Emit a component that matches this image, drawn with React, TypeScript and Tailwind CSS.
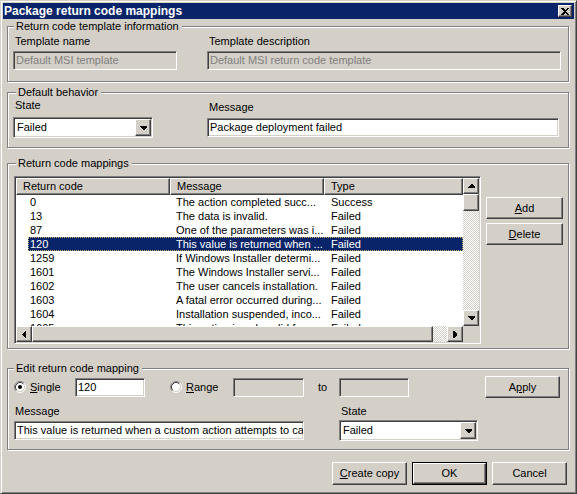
import React from "react";

type Row = { code: string; message: string; type: string; selected?: boolean };

const ROWS: Row[] = [
  { code: "0", message: "The action completed succ...", type: "Success" },
  { code: "13", message: "The data is invalid.", type: "Failed" },
  { code: "87", message: "One of the parameters was i...", type: "Failed" },
  { code: "120", message: "This value is returned when ...", type: "Failed", selected: true },
  { code: "1259", message: "If Windows Installer determi...", type: "Failed" },
  { code: "1601", message: "The Windows Installer servi...", type: "Failed" },
  { code: "1602", message: "The user cancels installation.", type: "Failed" },
  { code: "1603", message: "A fatal error occurred during...", type: "Failed" },
  { code: "1604", message: "Installation suspended, inco...", type: "Failed" },
  { code: "1605", message: "This action is only valid f...", type: "Failed" },
];

const raised =
  "border border-t-white border-l-white border-b-[#404040] border-r-[#404040] shadow-[inset_-1px_-1px_0_#808080] bg-[#d4d0c8]";
const checker =
  "bg-[image:repeating-conic-gradient(#ffffff_0%_25%,#d4d0c8_0%_50%)] bg-[length:2px_2px]";

function Sunken({
  className = "",
  disabled = false,
  children,
}: {
  className?: string;
  disabled?: boolean;
  children?: React.ReactNode;
}) {
  return (
    <div
      className={`border border-t-[#808080] border-l-[#808080] border-b-white border-r-white shadow-[inset_1px_1px_0_#404040,inset_-1px_-1px_0_#d4d0c8] ${
        disabled ? "bg-[#d4d0c8] text-[#808080]" : "bg-white text-black"
      } ${className}`}
    >
      {children}
    </div>
  );
}

function TextBox({ value = "", disabled, className = "" }: { value?: string; disabled?: boolean; className?: string }) {
  return (
    <Sunken disabled={disabled} className={`flex items-center pl-[2px] overflow-hidden whitespace-nowrap h-[19px] ${className}`}>
      {value}
    </Sunken>
  );
}

function Arrow({ dir }: { dir: "up" | "down" | "left" | "right" }) {
  if (dir === "up" || dir === "down") {
    const pts = dir === "up" ? "3,0 4,0 7,3 7,4 0,4 0,3" : "0,0 7,0 7,1 4,4 3,4 0,1";
    return (
      <svg width="7" height="4" viewBox="0 0 7 4" shapeRendering="crispEdges">
        <polygon points={pts} fill="#000" />
      </svg>
    );
  }
  const pts = dir === "right" ? "0,0 1,0 4,3 4,4 1,7 0,7" : "4,0 3,0 0,3 0,4 3,7 4,7";
  return (
    <svg width="4" height="7" viewBox="0 0 4 7" shapeRendering="crispEdges">
      <polygon points={pts} fill="#000" />
    </svg>
  );
}

function ScrollBtn({ dir, className = "" }: { dir: "up" | "down" | "left" | "right"; className?: string }) {
  return (
    <div className={`${raised} flex items-center justify-center w-[16px] h-[16px] shrink-0 ${className}`}>
      <Arrow dir={dir} />
    </div>
  );
}

function Combo({ value, className = "" }: { value: string; className?: string }) {
  return (
    <Sunken className={`flex items-center h-[21px] p-[1px] ${className}`}>
      <div className="flex-1 pl-[2px] whitespace-nowrap overflow-hidden">{value}</div>
      <div className={`${raised} w-[16px] h-[17px] flex items-center justify-center`}>
        <Arrow dir="down" />
      </div>
    </Sunken>
  );
}

function Button({
  children,
  className = "",
  isDefault = false,
}: {
  children: React.ReactNode;
  className?: string;
  isDefault?: boolean;
}) {
  const face = (
    <div className={`${raised} h-full flex items-center justify-center`}>{children}</div>
  );
  if (isDefault) {
    return <div className={`border border-black ${className}`}>{face}</div>;
  }
  return <div className={className}>{face}</div>;
}

function Radio({ checked }: { checked?: boolean }) {
  return (
    <svg width="12" height="12" viewBox="0 0 12 12" className="shrink-0">
      <circle cx="6" cy="6" r="4.5" fill="#fff" />
      <path d="M2.11 9.89 A5.5 5.5 0 0 1 9.89 2.11" stroke="#808080" fill="none" />
      <path d="M9.89 2.11 A5.5 5.5 0 0 1 2.11 9.89" stroke="#fff" fill="none" />
      <path d="M2.82 9.18 A4.5 4.5 0 0 1 9.18 2.82" stroke="#404040" fill="none" />
      <path d="M9.18 2.82 A4.5 4.5 0 0 1 2.82 9.18" stroke="#d4d0c8" fill="none" />
      {checked && <circle cx="6" cy="6" r="2" fill="#000" />}
    </svg>
  );
}

function Group({
  title,
  legendLeft = "left-[6px]",
  className = "",
  children,
}: {
  title: string;
  legendLeft?: string;
  className?: string;
  children: React.ReactNode;
}) {
  return (
    <div
      className={`relative ml-[4px] w-[562px] border border-[#808080] shadow-[inset_1px_1px_0_#fff,1px_1px_0_#fff] ${className}`}
    >
      <div className={`absolute top-[-7px] ${legendLeft} pl-[2px] pr-[3px] bg-[#d4d0c8] leading-[13px]`}>{title}</div>
      {children}
    </div>
  );
}

function ListView() {
  return (
    <Sunken className="w-[467px] h-[168px] p-[1px] flex">
      <div className="flex flex-col w-[447px]">
        <div className="flex h-[17px] shrink-0">
          <div className={`${raised} w-[154px] pl-[6px] flex items-center`}>Return code</div>
          <div className={`${raised} w-[154px] pl-[6px] flex items-center`}>Message</div>
          <div className={`${raised} w-[139px] pl-[6px] flex items-center`}>Type</div>
        </div>
        <div className="h-[131px] overflow-hidden bg-white">
          {ROWS.map((r) => (
            <div key={r.code} className="flex h-[14px]">
              <div className="w-[12px] shrink-0" />
              <div
                className={`flex w-[435px] h-[14px] items-center ${
                  r.selected
                    ? "bg-[#0a246a] text-white outline-1 outline-dotted outline-[#c9b66b] -outline-offset-1"
                    : ""
                }`}
              >
                <div className="w-[142px] pl-[2px] whitespace-nowrap overflow-hidden">{r.code}</div>
                <div className="w-[154px] pl-[6px] whitespace-nowrap overflow-hidden">{r.message}</div>
                <div className="w-[139px] pl-[7px] whitespace-nowrap overflow-hidden">{r.type}</div>
              </div>
            </div>
          ))}
        </div>
        <div className="flex h-[16px]">
          <ScrollBtn dir="left" />
          <div className={`${raised} w-[401px] h-[16px]`} />
          <div className={`w-[14px] h-[16px] ${checker}`} />
          <ScrollBtn dir="right" />
        </div>
      </div>
      <div className="flex flex-col w-[16px]">
        <ScrollBtn dir="up" />
        <div className={`${raised} w-[16px] h-[17px]`} />
        <div className={`w-[16px] h-[99px] ${checker}`} />
        <ScrollBtn dir="down" />
        <div className="w-[16px] h-[16px] bg-[#d4d0c8]" />
      </div>
    </Sunken>
  );
}

export default function App() {
  return (
    <div className="w-[577px] h-[494px] bg-[#d4d0c8] font-['Liberation_Sans',Arial,sans-serif] text-[11px] leading-[13px] text-black border border-t-[#d4d0c8] border-l-[#d4d0c8] border-b-[#404040] border-r-[#404040] shadow-[inset_1px_1px_0_#fff,inset_-1px_-1px_0_#808080] p-[2px] select-none">
      {/* title bar */}
      <div className="flex items-center h-[16px] bg-[#0a246a] text-white font-bold text-[12px] pl-[1px]">
        <div className="flex-1 whitespace-nowrap">Package return code mappings</div>
        <div className={`${raised} w-[14px] h-[12px] mr-[2px] flex items-center justify-center`}>
          <svg width="8" height="7" viewBox="0 0 8 7" shapeRendering="crispEdges">
            <path d="M0 0 H2 L4 2 L6 0 H8 L5 3.5 L8 7 H6 L4 5 L2 7 H0 L3 3.5 Z" fill="#000" />
          </svg>
        </div>
      </div>

      <Group title="Return code template information" className="mt-[7px] h-[56px]">
        <div className="flex pt-[8px]">
          <div className="ml-[5px] w-[164px]">
            <div className="pl-[2px] h-[13px]">Template name</div>
            <TextBox value="Default MSI template" disabled className="mt-[3px] w-[164px]" />
          </div>
          <div className="ml-[30px] w-[354px]">
            <div className="pl-[2px] h-[13px]">Template description</div>
            <TextBox value="Default MSI return code template" disabled className="mt-[3px] w-[354px]" />
          </div>
        </div>
      </Group>

      <Group title="Default behavior" legendLeft="left-[8px]" className="mt-[10px] h-[56px]">
        <div className="flex pt-[6px]">
          <div className="ml-[5px] w-[140px]">
            <div className="pl-[2px] h-[13px]">State</div>
            <Combo value="Failed" className="mt-[5px] w-[140px]" />
          </div>
          <div className="ml-[54px] w-[352px]">
            <div className="pl-[2px] h-[13px] mt-[2px]">Message</div>
            <TextBox value="Package deployment failed" className="mt-[4px] w-[352px]" />
          </div>
        </div>
      </Group>

      <Group title="Return code mappings" legendLeft="left-[8px]" className="mt-[15px] h-[186px]">
        <div className="flex pt-[12px]">
          <div className="ml-[6px]">
            <ListView />
          </div>
          <div className="ml-[5px] mt-[21px] w-[77px]">
            <Button className="h-[22px]">
              <span>
                <u>A</u>dd
              </span>
            </Button>
            <Button className="h-[22px] mt-[4px]">
              <span>
                <u>D</u>elete
              </span>
            </Button>
          </div>
        </div>
      </Group>

      <Group title="Edit return code mapping" className="mt-[19px] h-[82px]">
        <div className="flex items-center h-[22px] mt-[7px]">
          <div className="ml-[6px] w-[61px] flex items-center">
            <Radio checked />
            <span className="ml-[4px]">
              <u>S</u>ingle
            </span>
          </div>
          <TextBox value="120" className="w-[70px]" />
          <div className="ml-[25px] w-[63px] flex items-center">
            <Radio />
            <span className="ml-[4px]">
              <u>R</u>ange
            </span>
          </div>
          <TextBox disabled className="w-[71px]" />
          <div className="w-[35px] pl-[14px]">to</div>
          <TextBox disabled className="w-[70px]" />
          <Button className="ml-[76px] w-[75px] h-[22px]">
            <span>
              A<u>p</u>ply
            </span>
          </Button>
        </div>
        <div className="flex mt-[7px] h-[13px]">
          <div className="ml-[6px] w-[290px] pl-[1px]">Message</div>
          <div className="ml-[35px] pl-[2px]">State</div>
        </div>
        <div className="flex mt-[2px]">
          <TextBox
            value="This value is returned when a custom action attempts to call"
            className="ml-[6px] mt-[1px] w-[290px]"
          />
          <Combo value="Failed" className="ml-[35px] w-[139px]" />
        </div>
      </Group>

      <div className="flex mt-[12px] ml-[329px]">
        <Button className="w-[75px] h-[23px]">
          <span>
            <u>C</u>reate copy
          </span>
        </Button>
        <Button isDefault className="ml-[5px] w-[75px] h-[23px]">
          OK
        </Button>
        <Button className="ml-[5px] w-[75px] h-[23px]">Cancel</Button>
      </div>
    </div>
  );
}
